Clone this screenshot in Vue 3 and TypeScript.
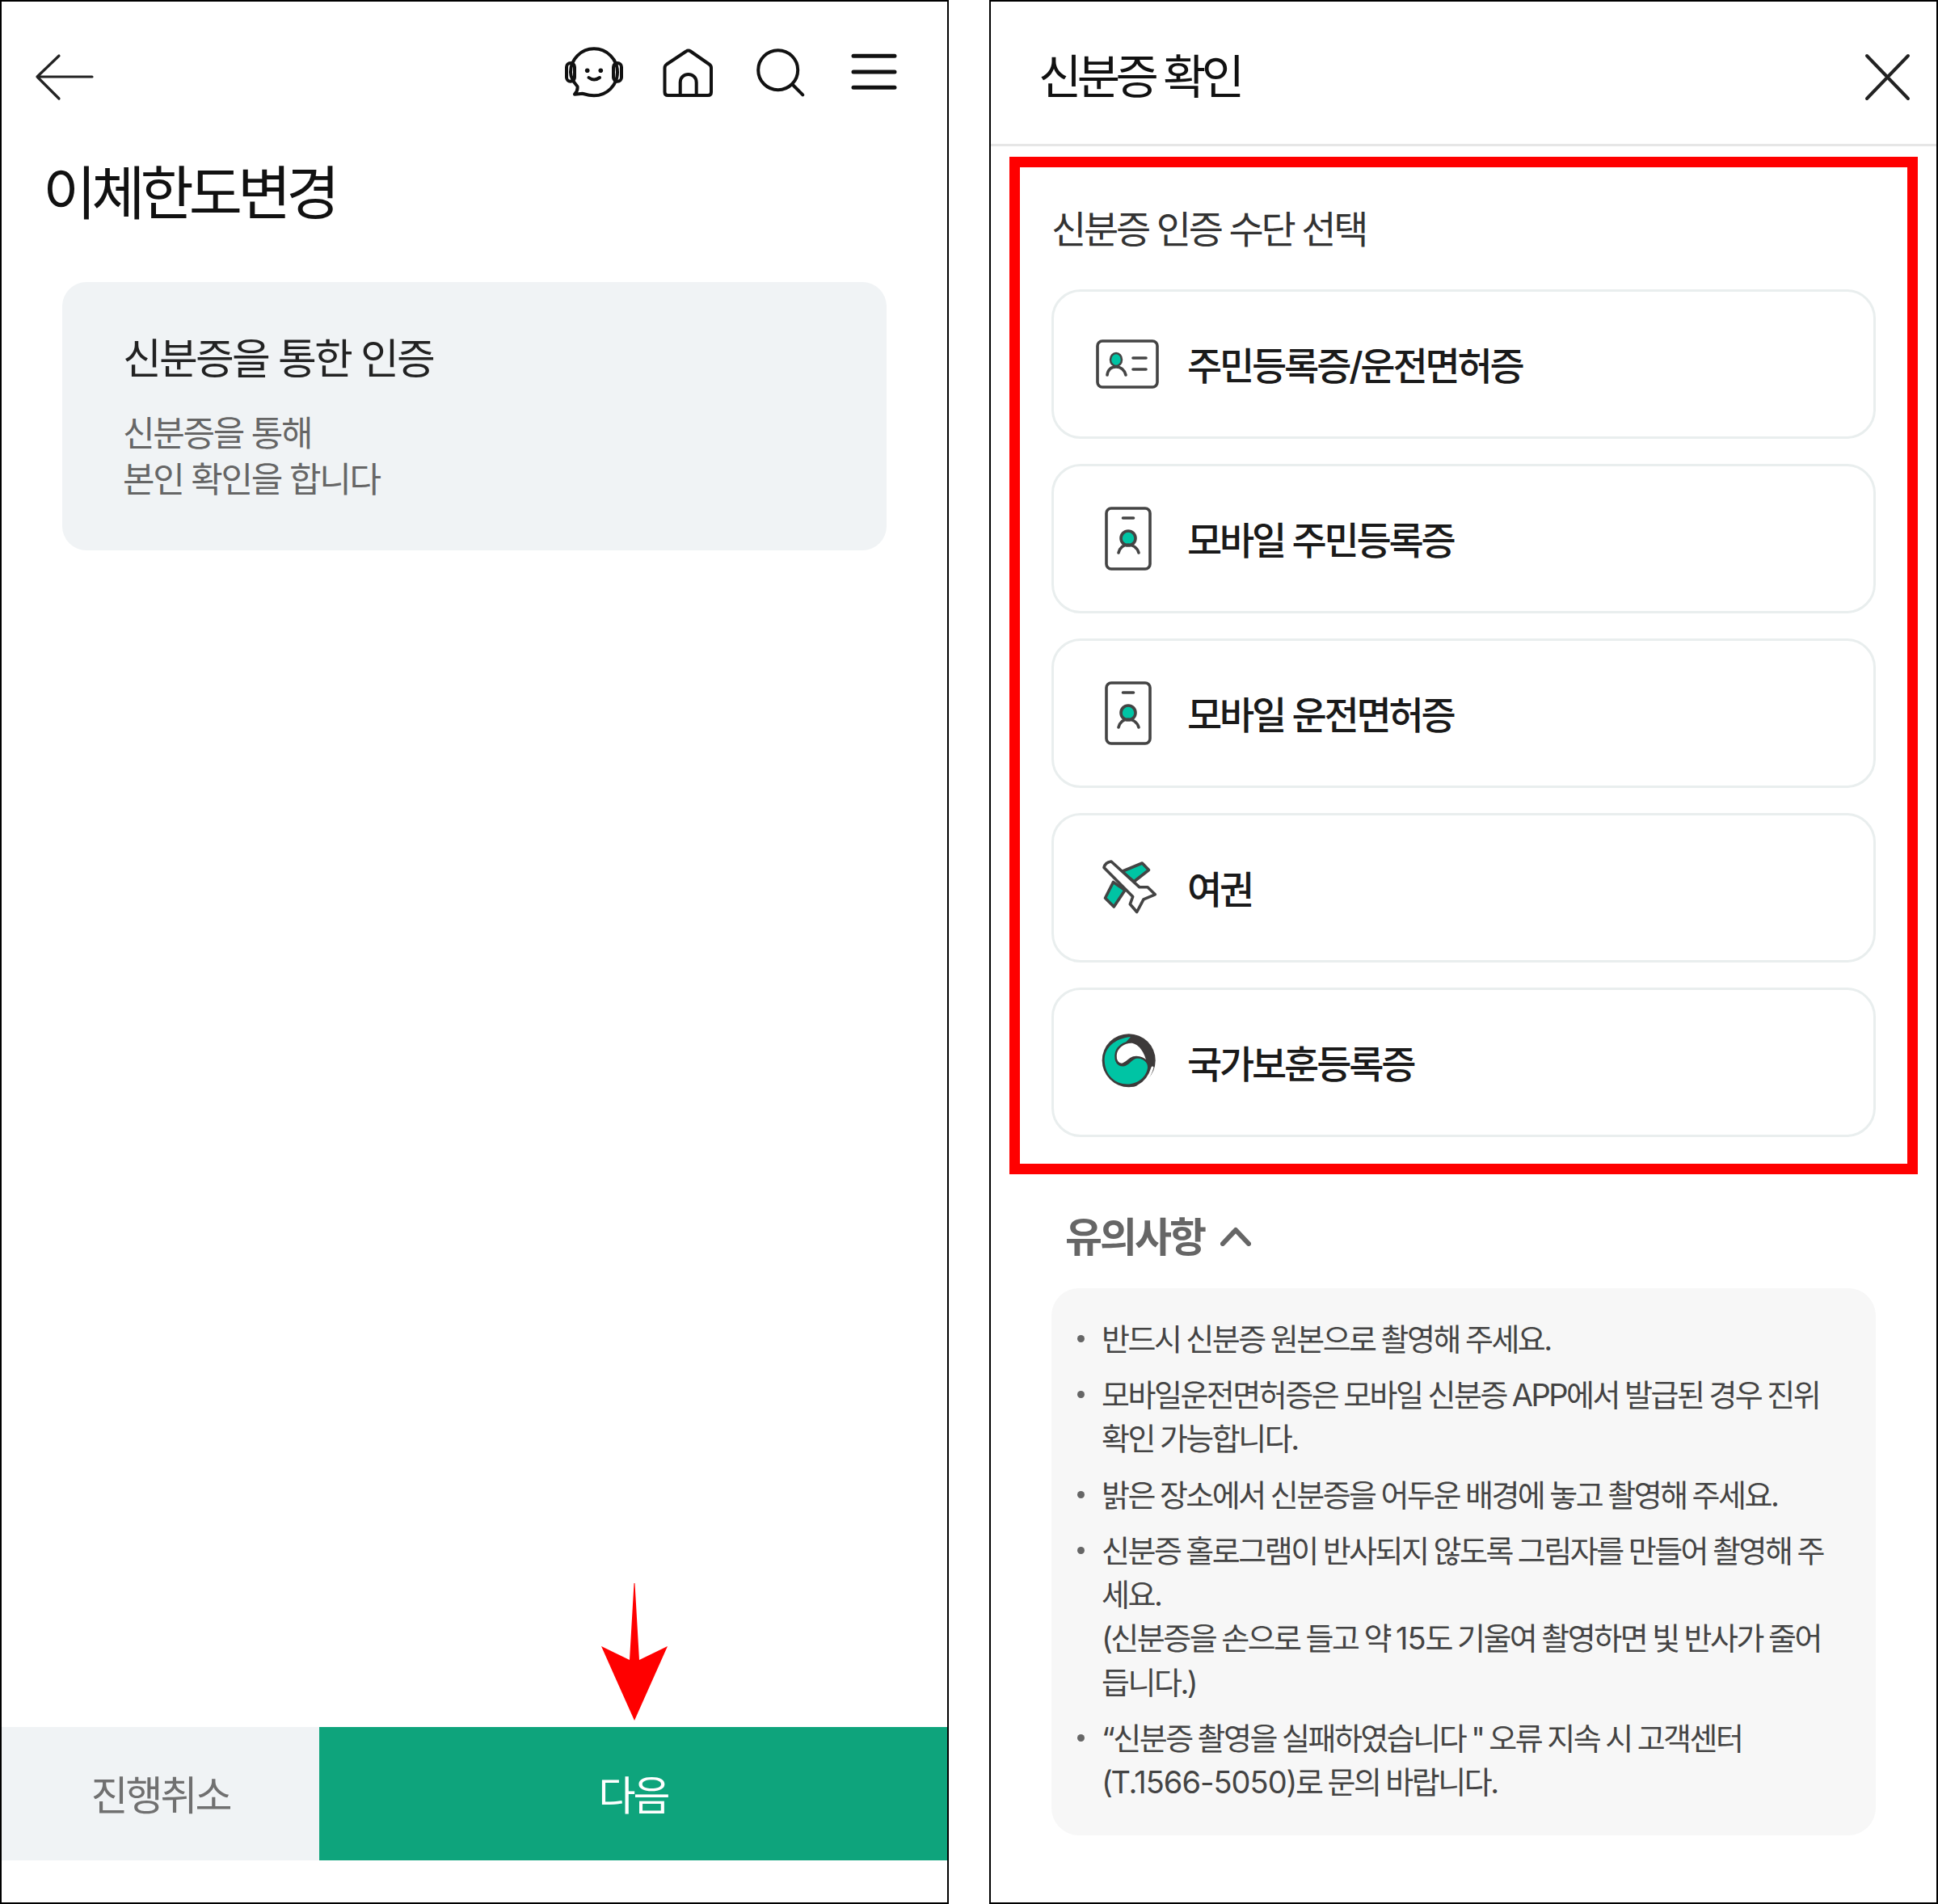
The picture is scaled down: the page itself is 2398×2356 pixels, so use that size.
<script setup lang="ts">
interface Row { label: string; icon: 'id' | 'mobile' | 'plane' | 'seal' }
const rows: Row[] = [
  { label: '주민등록증/운전면허증', icon: 'id' },
  { label: '모바일 주민등록증', icon: 'mobile' },
  { label: '모바일 운전면허증', icon: 'mobile' },
  { label: '여권', icon: 'plane' },
  { label: '국가보훈등록증', icon: 'seal' },
]
const notes: string[][] = [
  ['반드시 신분증 원본으로 촬영해 주세요.'],
  ['모바일운전면허증은 모바일 신분증 APP에서 발급된 경우 진위', '확인 가능합니다.'],
  ['밝은 장소에서 신분증을 어두운 배경에 놓고 촬영해 주세요.'],
  ['신분증 홀로그램이 반사되지 않도록 그림자를 만들어 촬영해 주', '세요.', '(신분증을 손으로 들고 약 15도 기울여 촬영하면 빛 반사가 줄어', '듭니다.)'],
  ['“신분증 촬영을 실패하였습니다 " 오류 지속 시 고객센터', '(T.1566-5050)로 문의 바랍니다.'],
]
const numberPattern = /(T\.1566-5050|15)/
const splitNumbers = (line: string): string[] => line.split(numberPattern)
const isNumber = (part: string): boolean => numberPattern.test(part)
</script>

<template>
  <div class="page">
    <section class="panel left">
      <header class="topbar">
        <svg class="ic" viewBox="0 0 80 80" fill="none" stroke="#222" stroke-width="3.2" stroke-linecap="round" stroke-linejoin="round">
          <path d="M33 19 L6 45 L33 72 M6 45 H74" />
        </svg>
        <div class="actions">
          <svg class="ic" viewBox="0 0 80 80" fill="none" stroke="#111" stroke-width="4" stroke-linecap="round" stroke-linejoin="round">
            <path d="M18.5 57 C13 51 10 45.500 10 39.300 C10 23.300 23 10.300 39 10.300 C55 10.300 68 23.300 68 39.300 C68 55.300 55 68.300 39 68.300 C33 68.300 29 67 25 65.800 L15 66.700 C17.500 64 19 60.500 18.500 57 Z" />
            <rect x="5" y="28" width="10" height="22.700" rx="5" />
            <rect x="63" y="28" width="10" height="22.700" rx="5" />
            <circle cx="30.700" cy="37.300" r="2.800" fill="#111" stroke="none" />
            <circle cx="47.300" cy="37.300" r="2.800" fill="#111" stroke="none" />
            <path d="M32.500 46 Q39 51 46 46" />
          </svg>
          <svg class="ic" viewBox="0 0 80 80" fill="none" stroke="#111" stroke-width="4" stroke-linecap="round" stroke-linejoin="round">
            <path d="M38 13.500 Q40.700 11.500 43.500 13.500 L66.500 29.500 Q69 31.300 69 34 V64 Q69 68 65 68 H15.500 Q11.500 68 11.500 64 V34 Q11.500 31.300 14 29.500 Z" />
            <path d="M30.700 68 V52 C30.700 38.500 50.700 38.500 50.700 52 V68" />
          </svg>
          <svg class="ic" viewBox="0 0 80 80" fill="none" stroke="#111" stroke-width="4" stroke-linecap="round">
            <circle cx="36.700" cy="36.700" r="24.500" />
            <path d="M55 55 L67.300 67.300" />
          </svg>
          <svg class="ic" viewBox="0 0 80 80" fill="none" stroke="#111" stroke-width="5" stroke-linecap="round">
            <path d="M15 19.300 H66 M15 39 H66 M15 58.300 H66" />
          </svg>
        </div>
      </header>

      <h1 class="page-title">이체한도변경</h1>

      <div class="info-card">
        <div class="info-title">신분증을 통한 인증</div>
        <p class="info-text">신분증을 통해<br />본인 확인을 합니다</p>
      </div>

      <div class="bottom">
        <div class="btn cancel">진행취소</div>
        <div class="btn next">다음</div>
        <svg class="pointer" viewBox="0 0 82 170" fill="#ff0000">
          <path d="M40.500 0 H41.500 L47 95 L82 78 L41 170 L0 78 L35 95 Z" />
        </svg>
      </div>
    </section>

    <section class="panel right">
      <header class="sheet-head">
        <h2 class="sheet-title">신분증 확인</h2>
        <svg class="ic close" viewBox="0 0 80 80" fill="none" stroke="#222" stroke-width="4" stroke-linecap="round">
          <path d="M14 14 L65 67 M65 14 L14 67" />
        </svg>
      </header>

      <div class="highlight">
        <div class="section-label">신분증 인증 수단 선택</div>
        <div class="list">
          <div v-for="row in rows" :key="row.label" class="row">
            <svg class="row-ic" viewBox="0 0 80 80" fill="none" stroke="#444" stroke-width="3.600" stroke-linecap="round" stroke-linejoin="round">
              <template v-if="row.icon === 'id'">
                <rect x="3" y="11" width="74" height="57" rx="6" />
                <ellipse cx="26" cy="34" rx="7" ry="8" fill="#00c4a4" stroke="#444" stroke-width="2.500" />
                <path d="M15 53 C16 46 20 43 26 43 C32 43 36 46 38 53" />
                <path d="M47 32 H63 M47 46 H63" />
              </template>
              <template v-else-if="row.icon === 'mobile'">
                <rect x="14" y="2" width="54" height="75" rx="6" />
                <path d="M34.500 14 H47.500" />
                <circle cx="41" cy="39" r="9" fill="#00c4a4" />
                <path d="M29 57 C31 50 36 47 41 47 C46 47 52 50 54 57" />
              </template>
              <template v-else-if="row.icon === 'plane'">
                <path d="M33 19.500 L58.300 9 L66.500 17.500 L48 32 Z M22.500 32.500 L12.500 52.200 L23.300 63 L37 42.500 Z" fill="#00c4a4" />
                <path d="M11 14.500 Q12.500 8 20 7 L55 38.800 H65 L74.300 47.800 L60 53.800 L51.700 69.500 L43.300 59.800 L46.700 50.500 Z" fill="#fff" />
              </template>
              <template v-else>
                <circle cx="41.700" cy="37.200" r="33" fill="#3d3a3a" stroke="none" />
                <path d="M44 8 C24 10 11 22 11.700 37.800 C12.500 55 24 66.500 40 66.500 C53 66.500 64 57 65 46 C65.500 39 59 33.500 52 34.500 C45 35.500 42 44 35 44.500 C27 45 23 37 26 31 C29 24 36 17 44 8 Z" fill="#00c4a4" stroke="none" />
                <path d="M25.500 31 C26 21 36 14 46 14.500 C55 16 63 27 65 40 C60 33 50 31 44 35 C38 40 36 42 33 42 C28 42 25 37 25.500 31 Z" fill="#fff" stroke="#3d3a3a" stroke-width="2.500" />
                <path d="M53 69 C62 65 68 56 71 46" stroke="#fff" stroke-width="3" />
              </template>
            </svg>
            <span class="row-text">{{ row.label }}</span>
          </div>
        </div>
      </div>

      <div class="notice-head">
        <span>유의사항</span>
        <svg class="chev" viewBox="0 0 38 24" fill="none" stroke="#666" stroke-width="6" stroke-linecap="round" stroke-linejoin="round">
          <path d="M3 21 L19 4 L35 21" />
        </svg>
      </div>

      <ul class="notes">
        <li v-for="(note, i) in notes" :key="i">
          <template v-for="(line, j) in note" :key="j"><template v-for="(part, k) in splitNumbers(line)" :key="k"><span v-if="isNumber(part)" class="num">{{ part }}</span><template v-else>{{ part }}</template></template><br v-if="j < note.length - 1" /></template>
        </li>
      </ul>
    </section>
  </div>
</template>

<style scoped>
.page {
  width: 2398px;
  height: 2356px;
  display: flex;
  gap: 50px;
  background: #fff;
  font-family: Inter, "Noto Sans CJK KR", "Noto Sans", sans-serif;
  overflow: hidden;
}
.panel {
  width: 1174px;
  height: 2356px;
  box-sizing: border-box;
  border: 2px solid #000;
  display: flex;
  flex-direction: column;
  background: #fff;
}
.ic { width: 80px; height: 80px; flex: none; display: block; }
.topbar {
  display: flex;
  justify-content: space-between;
  padding: 48px 51px 0 38px;
}
.actions { display: flex; gap: 35px; }
.page-title {
  margin: 59px 0 0 51px;
  font-size: 72px;
  font-weight: 400;
  line-height: 100px;
  letter-spacing: -6px;
  color: #111;
}
.info-card {
  margin: 60px 75px 0;
  height: 332px;
  box-sizing: border-box;
  padding: 61px 75px 0;
  background: #f0f3f5;
  border-radius: 30px;
}
.info-title {
  font-size: 52px;
  line-height: 70px;
  letter-spacing: -2.800px;
  color: #222;
}
.info-text {
  margin: 28px 0 0;
  font-size: 43px;
  line-height: 57px;
  letter-spacing: -2.300px;
  color: #666;
}
.bottom {
  position: relative;
  margin-top: auto;
  margin-bottom: 52px;
  height: 165px;
  display: flex;
}
.btn {
  display: flex;
  align-items: center;
  justify-content: center;
  font-size: 50px;
  letter-spacing: -3px;
  padding-bottom: 4px;
  box-sizing: border-box;
}
.cancel { width: 393px; background: #f0f3f5; color: #707070; }
.next { flex: 1; background: #0ea47c; color: #fff; }
.pointer {
  position: absolute;
  left: 742px;
  top: -178px;
  width: 82px;
  height: 170px;
}
.sheet-head {
  box-sizing: border-box;
  border-bottom: 3px solid #e6e6e6;
  height: 179px;
  padding: 0 20px 0 59px;
  display: flex;
  align-items: center;
  justify-content: space-between;
}
.sheet-title {
  margin: 1px 0 0;
  font-size: 58px;
  font-weight: 400;
  letter-spacing: -5.600px;
  color: #111;
}
.close { margin-top: 10px; }
.highlight {
  margin: 13px 23px 0;
  height: 1259px;
  box-sizing: border-box;
  border: 13px solid #ff0000;
  padding: 42px 39px 0;
}
.section-label {
  font-size: 47px;
  line-height: 70px;
  letter-spacing: -3.300px;
  color: #333;
}
.list {
  margin-top: 39px;
  display: flex;
  flex-direction: column;
  gap: 31px;
}
.row {
  height: 185px;
  box-sizing: border-box;
  border: 3px solid #e9eeee;
  border-radius: 36px;
  display: flex;
  align-items: center;
  padding-left: 51px;
  gap: 34px;
}
.row-ic { width: 80px; height: 80px; flex: none; }
.row-text {
  margin-top: -3px;
  font-size: 47px;
  font-weight: 500;
  letter-spacing: -3.200px;
  color: #1a1a1a;
}
.notice-head {
  margin: 43px 0 0 92px;
  display: flex;
  align-items: center;
  gap: 20px;
  font-size: 50px;
  font-weight: 700;
  line-height: 70px;
  letter-spacing: -3px;
  color: #666;
}
.chev { width: 38px; height: 24px; margin-top: -2px; }
.notes {
  margin: 28px 75px 0;
  height: 677px;
  box-sizing: border-box;
  padding: 36px 30px 0 62px;
  list-style: none;
  background: #f7f7f7;
  border-radius: 34px;
  font-size: 38px;
  line-height: 54.300px;
  letter-spacing: -2.500px;
  word-spacing: -1.200px;
  color: #444;
  white-space: nowrap;
}
.num { letter-spacing: -1px; }
.notes li { position: relative; margin-bottom: 14.900px; }
.notes li::before {
  content: "";
  position: absolute;
  left: -30px;
  top: 22px;
  width: 9px;
  height: 9px;
  border-radius: 50%;
  background: #666;
}
</style>

<style>
html, body { margin: 0; padding: 0; background: #fff; }
</style>
